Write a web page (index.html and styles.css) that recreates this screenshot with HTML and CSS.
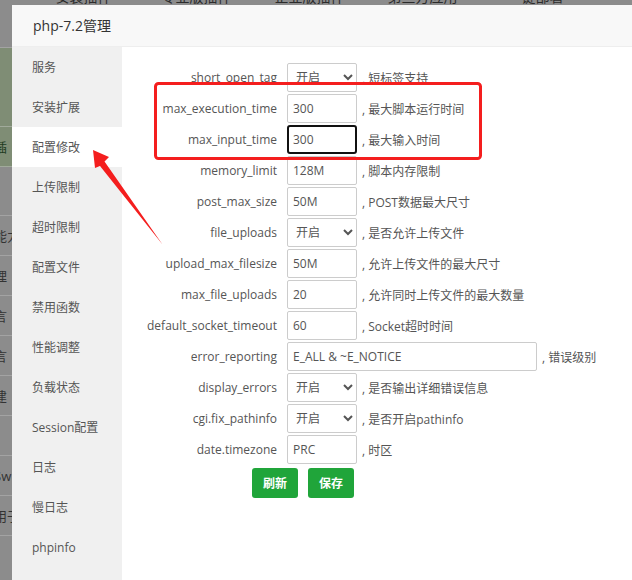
FILE: index.html
```html
<!DOCTYPE html>
<html lang="zh-CN">
<head>
  <meta charset="UTF-8">
  <title>php-7.2管理</title>
  <link rel="stylesheet" href="styles.css">
</head>
<body>
  <div class="page">
    <div class="page-tabs">
      <span>安装插件</span><span>专业版插件</span><span>企业版插件</span><span>第三方应用</span><span>一键部署</span>
    </div>
    <div class="page-list">
      <div class="page-row top"></div>
      <div class="page-row green tall"></div>
      <div class="page-row green">插</div>
      <div class="page-row mid"></div>
      <div class="page-row">能力</div>
      <div class="page-row">理</div>
      <div class="page-row">言</div>
      <div class="page-row">言</div>
      <div class="page-row">建</div>
      <div class="page-row"></div>
      <div class="page-row">Sw</div>
      <div class="page-row">用于</div>
    </div>
  </div>

  <div class="layer">
    <div class="layer-title">php-7.2管理</div>
    <div class="layer-body">
      <ul class="side-menu">
        <li>服务</li>
        <li>安装扩展</li>
        <li class="active">配置修改</li>
        <li>上传限制</li>
        <li>超时限制</li>
        <li>配置文件</li>
        <li>禁用函数</li>
        <li>性能调整</li>
        <li>负载状态</li>
        <li>Session配置</li>
        <li>日志</li>
        <li>慢日志</li>
        <li>phpinfo</li>
      </ul>
      <div class="conf">
        <div class="conf-row">
          <label>short_open_tag</label>
          <select><option>开启</option><option>关闭</option></select>
          <span class="desc">, 短标签支持</span>
        </div>
        <div class="conf-row">
          <label>max_execution_time</label>
          <input type="text" value="300">
          <span class="desc">, 最大脚本运行时间</span>
        </div>
        <div class="conf-row">
          <label>max_input_time</label>
          <input type="text" class="focus" value="300">
          <span class="desc">, 最大输入时间</span>
        </div>
        <div class="conf-row">
          <label>memory_limit</label>
          <input type="text" value="128M">
          <span class="desc">, 脚本内存限制</span>
        </div>
        <div class="conf-row">
          <label>post_max_size</label>
          <input type="text" value="50M">
          <span class="desc">, POST数据最大尺寸</span>
        </div>
        <div class="conf-row">
          <label>file_uploads</label>
          <select><option>开启</option><option>关闭</option></select>
          <span class="desc">, 是否允许上传文件</span>
        </div>
        <div class="conf-row">
          <label>upload_max_filesize</label>
          <input type="text" value="50M">
          <span class="desc">, 允许上传文件的最大尺寸</span>
        </div>
        <div class="conf-row">
          <label>max_file_uploads</label>
          <input type="text" value="20">
          <span class="desc">, 允许同时上传文件的最大数量</span>
        </div>
        <div class="conf-row">
          <label>default_socket_timeout</label>
          <input type="text" value="60">
          <span class="desc">, Socket超时时间</span>
        </div>
        <div class="conf-row">
          <label>error_reporting</label>
          <input type="text" class="wide" value="E_ALL &amp; ~E_NOTICE">
          <span class="desc">, 错误级别</span>
        </div>
        <div class="conf-row">
          <label>display_errors</label>
          <select><option>开启</option><option>关闭</option></select>
          <span class="desc">, 是否输出详细错误信息</span>
        </div>
        <div class="conf-row">
          <label>cgi.fix_pathinfo</label>
          <select><option>开启</option><option>关闭</option></select>
          <span class="desc">, 是否开启pathinfo</span>
        </div>
        <div class="conf-row">
          <label>date.timezone</label>
          <input type="text" value="PRC">
          <span class="desc">, 时区</span>
        </div>
        <div class="conf-btns">
          <button class="btn">刷新</button>
          <button class="btn">保存</button>
        </div>
      </div>
    </div>
  </div>

  <!-- screenshot annotation -->
  <svg class="marks" width="632" height="580" viewBox="0 0 632 580">
    <rect x="155.5" y="83.5" width="325" height="75" rx="3" fill="none" stroke="#f41e1e" stroke-width="3"/>
    <polygon points="93,150 109,157 104.5,161.5 162.5,244.5 100,166 95,168" fill="#f41e1e"/>
  </svg>
</body>
</html>
```

FILE: styles.css
```css
* {
  box-sizing: border-box;
}

body {
  margin: 0;
  width: 632px;
  height: 580px;
  overflow: hidden;
  position: relative;
  background-color: #8c8c8c;
  font-family: "Open Sans", "Noto Sans CJK SC", sans-serif;
  font-size: 12px;
}

/* page behind the dialog */
.page-tabs {
  display: flex;
  height: 5px;
  overflow: hidden;
  padding-left: 27px;
}

.page-tabs span {
  width: 113px;
  margin-top: -13px;
  line-height: 20px;
  font-size: 14px;
  text-align: center;
  color: #2b2b2b;
}

.page-list {
  width: 12px;
  overflow: hidden;
}

.page-row {
  height: 40px;
  line-height: 40px;
  margin-left: -6px;
  white-space: nowrap;
  font-size: 13px;
  color: #333;
  border-bottom: 1px solid #a3a3a3;
}

.page-row.top {
  height: 43px;
}

.page-row.green {
  background-color: #7f8d75;
  color: #1e3b1e;
  border-bottom-color: #a1aa9b;
}

.page-row.tall {
  height: 79px;
}

.page-row.mid {
  height: 49px;
}

/* dialog */
.layer {
  position: absolute;
  left: 12px;
  top: 5px;
  width: 640px;
  height: 600px;
  background-color: #fff;
}

.layer-title {
  height: 42px;
  line-height: 42px;
  padding: 0 21px;
  font-size: 14px;
  color: #333;
  background-color: #f8f8f8;
  border-bottom: 1px solid #eee;
}

.layer-body {
  display: flex;
  height: 558px;
}

.side-menu {
  list-style: none;
  margin: 0;
  padding: 0;
  width: 110px;
  background-color: #f0f0f0;
}

.side-menu li {
  height: 40px;
  line-height: 42px;
  padding-left: 20px;
  color: #555;
}

.side-menu li.active {
  background-color: #fff;
}

.conf {
  flex-grow: 1;
  padding: 16px 0 0 15px;
}

.conf-row {
  display: flex;
  align-items: center;
  height: 29px;
  margin-bottom: 2px;
}

.conf-row label {
  width: 140px;
  margin-right: 10px;
  text-align: right;
  color: #555;
}

.conf-row input,
.conf-row select {
  width: 70px;
  height: 29px;
  border: 1px solid #ccc;
  border-radius: 2px;
  font-family: inherit;
  font-size: 12px;
  color: #555;
  background-color: #fff;
  outline: none;
}

.conf-row input {
  padding: 0 5px;
}

.conf-row select {
  padding: 0 4px;
}

.conf-row input.wide {
  width: 250px;
}

.conf-row input.focus {
  border: 2px solid #111;
  border-radius: 3px;
  padding: 0 4px;
}

.desc {
  margin-left: 5px;
  color: #555;
}

.conf-btns {
  display: flex;
  gap: 10px;
  padding-left: 115px;
  margin-top: 4px;
}

.btn {
  width: 46px;
  height: 30px;
  border: none;
  border-radius: 3px;
  background-color: #20a53a;
  color: #fff;
  font-family: inherit;
  font-size: 12px;
  font-weight: bold;
  cursor: pointer;
}

.marks {
  position: absolute;
  left: 0;
  top: 0;
  pointer-events: none;
}
```
